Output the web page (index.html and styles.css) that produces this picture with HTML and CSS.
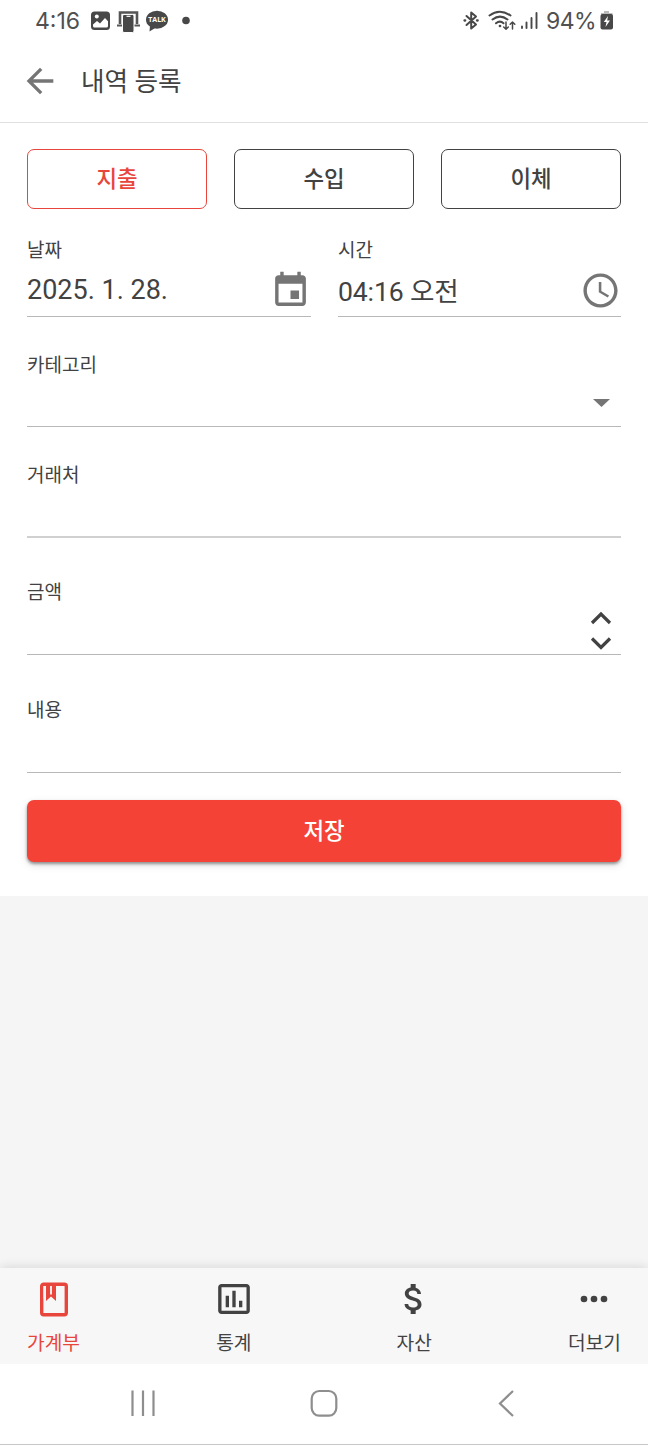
FILE: index.html
```html
<!DOCTYPE html>
<html lang="ko">
<head>
<meta charset="utf-8">
<title>내역 등록</title>
<link rel="stylesheet" href="styles.css">
</head>
<body>
<div class="screen">
  <div class="status">
    <div class="status-left">
      <span class="clock">4:16</span>
      <svg class="notices" width="104" height="26" viewBox="0 0 104 26">
        <rect x="1" y="4.500" width="19" height="18.500" rx="3.500" fill="#484848"/>
        <circle cx="6.800" cy="9.500" r="2" fill="#fff"/>
        <path d="M3 17.500L7 14L10 16.500L15 11L18 14.300V19Q18 20.500 16.500 20.500H4.500Q3 20.500 3 19Z" fill="#fff"/>
        <path d="M30 17V5.500H47V17" fill="none" stroke="#555" stroke-width="2.600"/>
        <path d="M27 18.500H50" stroke="#555" stroke-width="2"/>
        <rect x="32.500" y="7.500" width="11.500" height="18" rx="1.500" fill="#484848" stroke="#fff" stroke-width="1"/>
        <path d="M36.500 9.300H40.500" stroke="#fff" stroke-width="1.200"/>
        <ellipse cx="67" cy="12.700" rx="11" ry="9" fill="#484848"/>
        <path d="M60 18.500L59.500 24.500L66 20.500Z" fill="#484848"/>
        <text class="talk" x="67" y="15.200" text-anchor="middle">TALK</text>
        <circle cx="96" cy="13.500" r="3.800" fill="#484848"/>
      </svg>
    </div>
    <div class="status-right">
      <svg width="78" height="26" viewBox="0 0 78 26" fill="none" stroke="#484848" stroke-linecap="round" stroke-linejoin="round">
        <path d="M4.500 9L14 17.500L9.200 21.500V5.500L14 9.500L4.500 18" stroke-width="2"/>
        <path d="M2.500 13.500H3.200M15 13.500H15.700" stroke-width="2.300"/>
        <path d="M27.500 8.500Q37.500 1 48.500 8.500M30.500 12.500Q38 6.700 45.500 12.500M34 16.300Q38 13 41.500 16.300" stroke-width="2"/>
        <circle cx="38" cy="19" r=".7" stroke-width="1.300"/>
        <path d="M44 15V22M41.700 20L44 22.200L46.300 20M50.500 22V15M48.200 17.200L50.500 15L52.800 17.200" stroke-width="1.500"/>
        <path d="M60 19.500V21M64.500 15.500V21M69.500 11V21M74.500 6V21" stroke-width="1.900"/>
      </svg>
      <span class="percent">94%</span>
      <svg class="battery" width="14" height="20" viewBox="0 0 14 20">
        <path d="M4 0H9V2H12.500V6H1V2H4Z" fill="#bbb"/>
        <rect x=".5" y="3" width="12.500" height="15.500" rx="2" fill="#484848"/>
        <path d="M8 5L3.800 11H6.500L5.500 16L10 9.500H7.200Z" fill="#fff"/>
      </svg>
    </div>
  </div>

  <header class="appbar">
    <svg width="40" height="40" viewBox="0 0 24 24" fill="#757575"><path d="M20 11H7.830l5.590-5.590L12 4l-8 8 8 8 1.410-1.410L7.830 13H20v-2z"/></svg>
    <h1 class="title">내역 등록</h1>
  </header>

  <main class="form">
    <div class="types">
      <button class="type type-active">지출</button>
      <button class="type">수입</button>
      <button class="type">이체</button>
    </div>
    <div class="pair">
      <div class="field">
        <span class="label">날짜</span>
        <div class="value date">
          <span>2025. 1. 28.</span>
          <svg width="41" height="41" viewBox="0 0 24 24" fill="#757575"><path d="M17 12h-5v5h5v-5zM16 1v2H8V1H6v2H5c-1.110 0-1.990.9-1.990 2L3 19c0 1.100.89 2 2 2h14c1.100 0 2-.9 2-2V5c0-1.100-.9-2-2-2h-1V1h-2zm3 18H5V8h14v11z"/></svg>
        </div>
      </div>
      <div class="field">
        <span class="label">시간</span>
        <div class="value time">
          <span>04:16 오전</span>
          <svg width="41" height="41" viewBox="0 0 24 24" fill="#757575"><path d="M11.990 2C6.470 2 2 6.480 2 12s4.470 10 9.990 10C17.520 22 22 17.520 22 12S17.520 2 11.990 2zM12 20c-4.420 0-8-3.580-8-8s3.580-8 8-8 8 3.580 8 8-3.580 8-8 8zm.5-13H11v6l5.250 3.150.75-1.230-4.500-2.670z"/></svg>
        </div>
      </div>
    </div>
    <div class="field category">
      <span class="label">카테고리</span>
      <div class="value">
        <svg class="caret" width="17" height="8" viewBox="0 0 17 8"><path d="M0 0H17L8.500 8Z" fill="#757575"/></svg>
      </div>
    </div>
    <div class="field vendor">
      <span class="label">거래처</span>
      <div class="value"></div>
    </div>
    <div class="field amount">
      <span class="label">금액</span>
      <div class="value">
        <svg class="stepper" width="22" height="40" viewBox="0 0 22 40" fill="none" stroke="#424242" stroke-width="3.200"><path d="M2 12L11 3L20 12M2 27.500L11 36.500L20 27.500"/></svg>
      </div>
    </div>
    <div class="field memo">
      <span class="label">내용</span>
      <div class="value"></div>
    </div>
    <button class="save">저장</button>
  </main>

  <nav class="tabs">
    <a class="tab tab-active">
      <svg width="40" height="40" viewBox="0 0 40 40" fill="none" stroke="#e8463c"><rect x="7.700" y="5.200" width="24.600" height="30.600" rx="2" stroke-width="3.400"/><path d="M12 5.500V22L17 17.500L22 22V5.500Z" fill="#e8463c" stroke="none"/><path d="M17 7V15.500M10.500 7V19.500" stroke="#f7f7f7" stroke-width="1.800"/></svg>
      <span>가계부</span>
    </a>
    <a class="tab">
      <svg width="40" height="40" viewBox="0 0 24 24" fill="#424242"><path d="M9 17H7v-7h2v7zm4 0h-2V7h2v10zm4 0h-2v-4h2v4zm2.500 2.100h-15V5h15v14.100zm0-16.100h-15c-1.100 0-2 .9-2 2v14c0 1.100.9 2 2 2h15c1.100 0 2-.9 2-2V5c0-1.100-.9-2-2-2z"/></svg>
      <span>통계</span>
    </a>
    <a class="tab">
      <svg width="40" height="40" viewBox="0 0 24 24" fill="#424242"><path d="M11.800 10.900c-2.270-.59-3-1.200-3-2.150 0-1.090 1.010-1.850 2.700-1.850 1.780 0 2.440.85 2.500 2.100h2.210c-.07-1.720-1.120-3.300-3.210-3.810V3h-3v2.160c-1.940.42-3.500 1.680-3.500 3.610 0 2.310 1.910 3.460 4.700 4.130 2.500.6 3 1.480 3 2.410 0 .69-.49 1.790-2.700 1.790-2.060 0-2.870-.92-2.980-2.100h-2.200c.12 2.190 1.760 3.420 3.680 3.830V21h3v-2.150c1.950-.37 3.500-1.500 3.500-3.550 0-2.840-2.430-3.810-4.700-4.400z"/></svg>
      <span>자산</span>
    </a>
    <a class="tab">
      <svg width="40" height="40" viewBox="0 0 24 24" fill="#424242"><circle cx="6" cy="12" r="2"/><circle cx="12" cy="12" r="2"/><circle cx="18" cy="12" r="2"/></svg>
      <span>더보기</span>
    </a>
  </nav>

  <div class="system">
    <svg width="28" height="28" viewBox="0 0 28 28" stroke="#8e8e8e" stroke-width="2.200"><path d="M3.500 1.500V27M14 1.500V27M24.500 1.500V27"/></svg>
    <svg width="28" height="28" viewBox="0 0 28 28" fill="none" stroke="#8e8e8e" stroke-width="2.200"><rect x="1.700" y="2" width="24.600" height="24.600" rx="7.500"/></svg>
    <svg width="28" height="28" viewBox="0 0 28 28" fill="none" stroke="#8e8e8e" stroke-width="2.200"><path d="M22 2L9 14.500L22 27"/></svg>
  </div>
</div>
</body>
</html>
```

FILE: styles.css
```css
* { box-sizing: border-box; }
body { margin: 0; }
svg { display: block; flex: none; }
button { font: inherit; padding: 0; }

.screen {
  display: flex;
  flex-direction: column;
  width: 648px;
  height: 1445px;
  background: #f5f5f5;
  color: #424242;
  font-family: Roboto, "Noto Sans CJK KR", sans-serif;
}

.status {
  display: flex;
  justify-content: space-between;
  height: 41px;
  padding: 0 34px 0 35px;
  background: #fff;
  font-family: Inter, Roboto, sans-serif;
  font-size: 23px;
  line-height: 42px;
  color: #505050;
}
.status-left, .status-right { display: flex; }
.clock { width: 55px; letter-spacing: 0; }
.notices { margin-top: 7px; }
.talk { font: bold 7px "Open Sans", sans-serif; fill: #fff; }
.status-right svg { margin-top: 7px; }
.percent { width: 54px; margin-left: 6px; letter-spacing: -0.6px; }
.status-right .battery { margin-top: 11px; }

.appbar {
  display: flex;
  align-items: center;
  gap: 21px;
  height: 82px;
  padding: 0 0 1px 20px;
  border-bottom: 1px solid #e0e0e0;
  background: #fff;
}
.title { margin: 1px 0 0; font-size: 25.6px; font-weight: 400; line-height: 36px; }

.form {
  display: flex;
  flex-direction: column;
  height: 773px;
  padding: 26px 27px 0;
  background: #fff;
}
.types { display: grid; grid-template-columns: repeat(3, 1fr); gap: 27px; }
.type {
  height: 60px;
  border: 1px solid #424242;
  border-radius: 7px;
  background: #fff;
  color: #424242;
  font-size: 22.4px;
  font-weight: 500;
  line-height: 58px;
}
.type-active { border-color: #e8463c; color: #e8463c; }

.pair { display: grid; grid-template-columns: 284px 283px; gap: 27px; margin-top: 29px; }
.field { display: flex; flex-direction: column; height: 74px; border-bottom: 1px solid #b8b8b8; }
.pair .field { height: 79px; }
.label { height: 20px; font-size: 19px; line-height: 25px; }
.value { display: flex; justify-content: space-between; flex: 1; font-size: 27px; line-height: 40px; }
.date { padding-top: 12px; }
.time { padding-top: 14px; font-size: 26.6px; letter-spacing: -0.15px; }
.time svg { margin-top: -2px; }
.category { margin-top: 36px; }
.category .value, .amount .value { justify-content: flex-end; }
.caret { margin: 26px 11px 0 0; }
.vendor { height: 75px; margin-top: 36px; border-bottom: 2px solid #d0d0d0; }
.amount { height: 75px; margin-top: 42px; }
.stepper { margin: 11px 9px 0 0; }
.memo { height: 75px; margin-top: 43px; }
.save {
  height: 62px;
  margin-top: 27px;
  border: 0;
  border-radius: 7px;
  background: #f44336;
  box-shadow: 0 2px 3px rgba(0, 0, 0, .38), 0 3px 8px rgba(0, 0, 0, .13);
  color: #fff;
  font-size: 22.4px;
  font-weight: 500;
  line-height: 62px;
}

.tabs {
  display: flex;
  justify-content: space-between;
  height: 96px;
  margin-top: auto;
  padding: 11px 27px 0;
  background: #f7f7f7;
  box-shadow: 0 -1px 10px rgba(0, 0, 0, .12);
}
.tab {
  display: flex;
  flex-direction: column;
  align-items: center;
  gap: 13px;
  width: 53px;
  font-size: 19.2px;
  line-height: 24px;
  white-space: nowrap;
}
.tab-active { color: #e8463c; }

.system {
  position: relative;
  display: flex;
  justify-content: space-between;
  height: 81px;
  padding: 25px 129px 0;
  border-bottom: 1px solid #c8c8c8;
  background: #fff;
}
```
